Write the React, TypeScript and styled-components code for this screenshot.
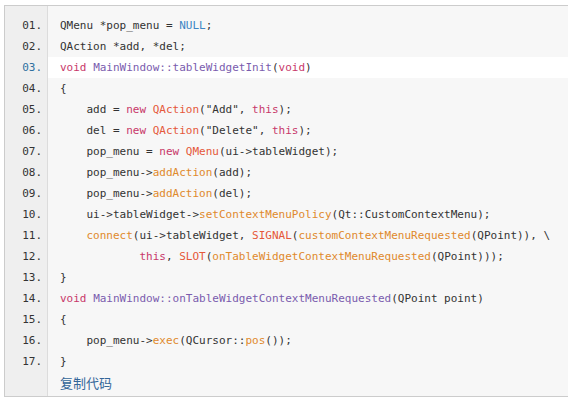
import React from "react";
import styled, { createGlobalStyle } from "styled-components";

const Global = createGlobalStyle`
  html, body { margin: 0; padding: 0; background: #fff; overflow: hidden; }
  body { width: 568px; height: 402px; }
`;

const Page = styled.div`
  width: 568px;
  box-sizing: border-box;
  padding: 5px 0 0 4px;
`;

const Block = styled.div`
  display: grid;
  grid-template-columns: 43px 1fr;
  border: 1px solid #cccccc;
  border-right: none;
  background: #f7f7f7;
  font-family: "DejaVu Sans Mono", "Liberation Mono", monospace;
  font-size: 11px;
  color: #333;
`;

const Gutter = styled.div`
  background: #efefef;
  border-right: 1px solid #dcdcdc;
  padding-top: 9px;
  padding-bottom: 24px;
`;

const Num = styled.div<{ $active?: boolean }>`
  height: 21px;
  line-height: 21px;
  text-align: right;
  padding-right: 5px;
  color: ${(p) => (p.$active ? "#2f6f9f" : "#333")};
`;

const Code = styled.div`
  padding-top: 9px;
  padding-bottom: 2px;
  min-width: 0;
  overflow: hidden;
`;

const Line = styled.div<{ $active?: boolean }>`
  height: 21px;
  line-height: 21px;
  padding-left: 12px;
  white-space: pre;
  background: ${(p) => (p.$active ? "#ffffff" : "transparent")};
`;

const colors: Record<string, string> = {
  kw: "#c8386a",
  type: "#e5583a",
  fn: "#e0892c",
  macro: "#e5583a",
  cls: "#7a5cae",
  lit: "#3e86c4",
};

const Tok = styled.span<{ $k: string }>`
  color: ${(p) => colors[p.$k]};
`;

const Copy = styled.div`
  height: 22px;
  line-height: 22px;
  padding-left: 12px;
  font-family: "Noto Sans CJK SC", "Noto Sans", sans-serif;
  font-size: 13px;
  color: #336699;
`;

type Part = string | [string, string];

const lines: Part[][] = [
  ["QMenu *pop_menu = ", ["lit", "NULL"], ";"],
  ["QAction *add, *del;"],
  [["kw", "void"], " ", ["cls", "MainWindow::tableWidgetInit"], "(", ["kw", "void"], ")"],
  ["{"],
  ["    add = ", ["kw", "new"], " ", ["type", "QAction"], '("Add", ', ["kw", "this"], ");"],
  ["    del = ", ["kw", "new"], " ", ["type", "QAction"], '("Delete", ', ["kw", "this"], ");"],
  ["    pop_menu = ", ["kw", "new"], " ", ["type", "QMenu"], "(ui->tableWidget);"],
  ["    pop_menu->", ["fn", "addAction"], "(add);"],
  ["    pop_menu->", ["fn", "addAction"], "(del);"],
  ["    ui->tableWidget->", ["fn", "setContextMenuPolicy"], "(Qt::CustomContextMenu);"],
  [
    "    ",
    ["fn", "connect"],
    "(ui->tableWidget, ",
    ["macro", "SIGNAL"],
    "(",
    ["fn", "customContextMenuRequested"],
    "(QPoint)), \\",
  ],
  [
    "            ",
    ["kw", "this"],
    ", ",
    ["macro", "SLOT"],
    "(",
    ["fn", "onTableWidgetContextMenuRequested"],
    "(QPoint)));",
  ],
  ["}"],
  [["kw", "void"], " ", ["cls", "MainWindow::onTableWidgetContextMenuRequested"], "(QPoint point)"],
  ["{"],
  ["    pop_menu->", ["fn", "exec"], "(QCursor::", ["fn", "pos"], "());"],
  ["}"],
];

const ACTIVE = 2;

export default function App() {
  return (
    <>
      <Global />
      <Page>
        <Block>
          <Gutter>
            {lines.map((_, i) => (
              <Num key={i} $active={i === ACTIVE}>
                {String(i + 1).padStart(2, "0")}.
              </Num>
            ))}
          </Gutter>
          <Code>
            {lines.map((parts, i) => (
              <Line key={i} $active={i === ACTIVE}>
                {parts.map((p, j) =>
                  typeof p === "string" ? (
                    <React.Fragment key={j}>{p}</React.Fragment>
                  ) : (
                    <Tok key={j} $k={p[0]}>
                      {p[1]}
                    </Tok>
                  )
                )}
              </Line>
            ))}
            <Copy>复制代码</Copy>
          </Code>
        </Block>
      </Page>
    </>
  );
}
